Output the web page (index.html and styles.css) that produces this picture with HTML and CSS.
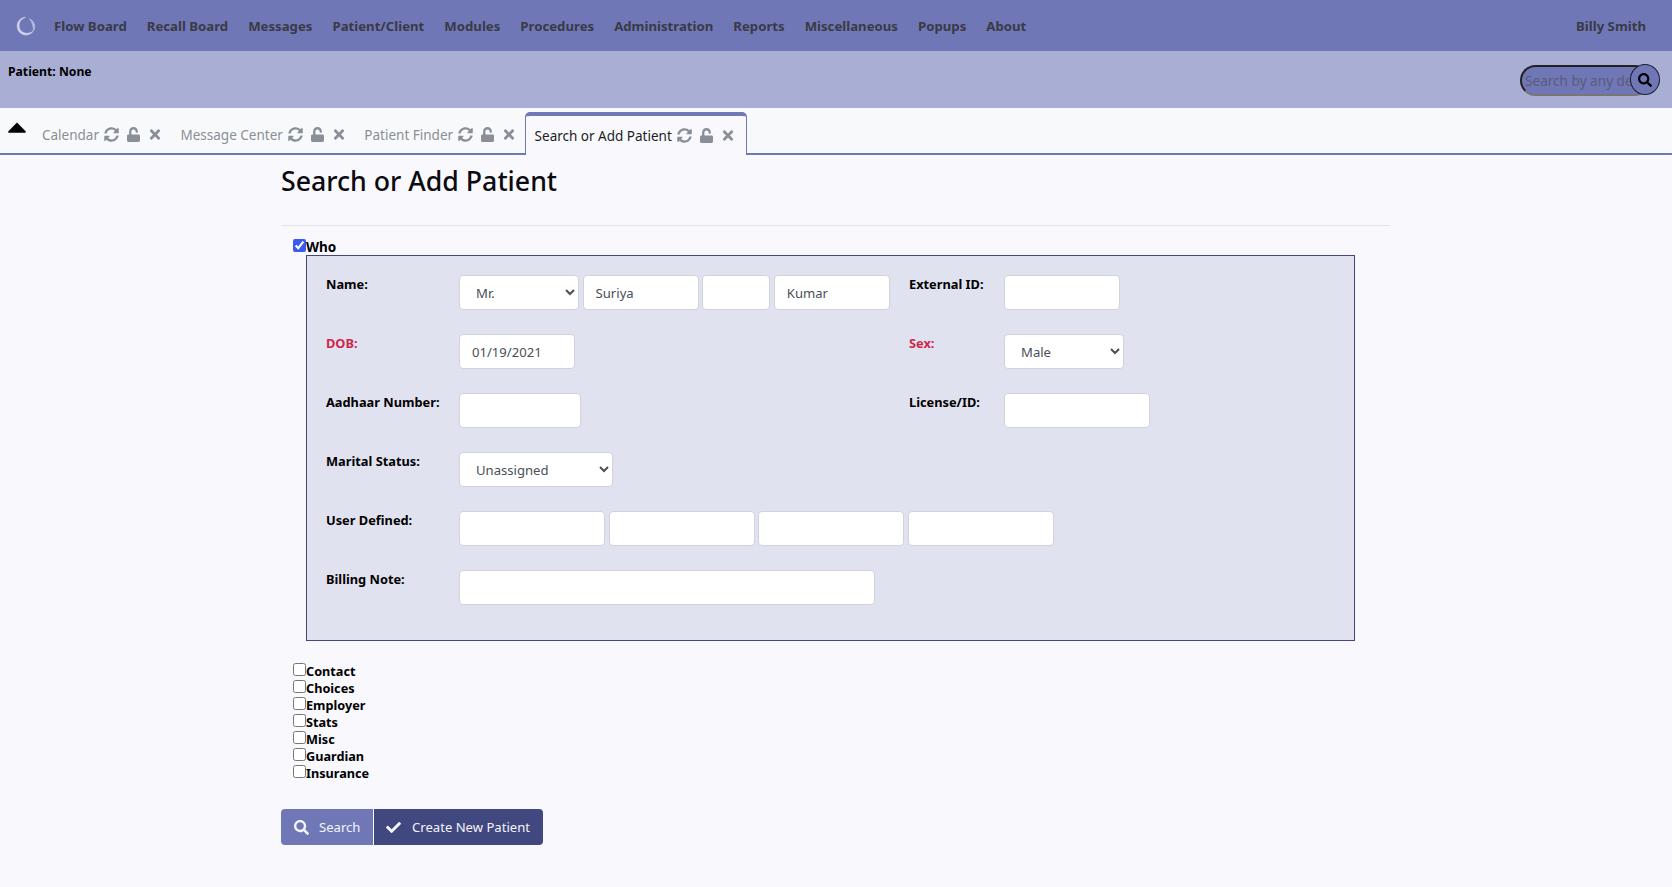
FILE: index.html
```html
<!DOCTYPE html>
<html lang="en">
<head>
<meta charset="utf-8">
<title>Search or Add Patient</title>
<link rel="stylesheet" href="styles.css">
</head>
<body>
<svg class="defs" width="0" height="0" aria-hidden="true">
  <symbol id="i-sync" viewBox="0 0 512 512"><path d="M370.72 133.28C339.458 104.008 298.888 87.962 255.848 88c-77.458.068-144.328 53.178-162.791 126.85-1.344 5.363-6.122 9.15-11.651 9.15H24.103c-7.498 0-13.194-6.807-11.807-14.176C33.933 94.924 134.813 8 256 8c66.448 0 126.791 26.136 171.315 68.685L463.03 40.97C478.149 25.851 504 36.559 504 57.941V192c0 13.255-10.745 24-24 24H345.941c-21.382 0-32.09-25.851-16.971-40.971l41.75-41.749zM32 296h134.059c21.382 0 32.09 25.851 16.971 40.971l-41.75 41.75c31.262 29.273 71.835 45.319 114.876 45.28 77.418-.07 144.315-53.144 162.787-126.849 1.344-5.363 6.122-9.15 11.651-9.15h57.304c7.498 0 13.194 6.807 11.807 14.176C478.067 417.076 377.187 504 256 504c-66.448 0-126.791-26.136-171.315-68.685L48.97 471.03C33.851 486.149 8 475.441 8 454.059V320c0-13.255 10.745-24 24-24z"/></symbol>
  <symbol id="i-unlock" viewBox="0 0 448 512"><path d="M400 256H152V152.9c0-39.6 31.7-72.5 71.3-72.9 40-.4 72.7 32.1 72.7 72v16c0 13.3 10.7 24 24 24h32c13.3 0 24-10.7 24-24v-16C376 68 307.5-.3 223.5 0 139.5.3 72 69.5 72 153.5V256H48c-26.5 0-48 21.5-48 48v160c0 26.5 21.5 48 48 48h352c26.5 0 48-21.5 48-48V304c0-26.5-21.5-48-48-48z"/></symbol>
  <symbol id="i-times" viewBox="0 0 352 512"><path d="M242.72 256l100.07-100.07c12.28-12.28 12.28-32.19 0-44.48l-22.24-22.24c-12.28-12.28-32.19-12.28-44.48 0L176 189.28 75.93 89.21c-12.28-12.28-32.19-12.28-44.48 0L9.21 111.45c-12.28 12.28-12.28 32.19 0 44.48L109.28 256 9.21 356.07c-12.28 12.28-12.28 32.19 0 44.48l22.24 22.24c12.28 12.28 32.2 12.28 44.48 0L176 322.72l100.07 100.07c12.28 12.28 32.2 12.28 44.48 0l22.24-22.24c12.28-12.28 12.28-32.19 0-44.48L242.72 256z"/></symbol>
  <symbol id="i-search" viewBox="0 0 512 512"><path d="M505 442.7L405.3 343c-4.5-4.5-10.6-7-17-7H372c27.6-35.3 44-79.7 44-128C416 93.1 322.9 0 208 0S0 93.1 0 208s93.1 208 208 208c48.3 0 92.7-16.4 128-44v16.3c0 6.4 2.5 12.5 7 17l99.7 99.7c9.4 9.4 24.6 9.4 33.9 0l28.3-28.3c9.4-9.4 9.4-24.6.1-34zM208 336c-70.7 0-128-57.2-128-128 0-70.7 57.2-128 128-128 70.7 0 128 57.2 128 128 0 70.7-57.2 128-128 128z"/></symbol>
  <symbol id="i-check" viewBox="0 0 512 512"><path d="M173.898 439.404l-166.4-166.4c-9.997-9.997-9.997-26.206 0-36.204l36.203-36.204c9.997-9.998 26.207-9.998 36.204 0L192 312.69 432.095 72.596c9.997-9.997 26.207-9.997 36.204 0l36.203 36.204c9.997 9.997 9.997 26.206 0 36.204l-294.4 294.401c-9.998 9.997-26.207 9.997-36.204-.001z"/></symbol>
</svg>

<header class="navbar">
  <svg class="logo" viewBox="0 0 20 20">
    <path class="logo-strong" d="M9.5 1.3C4.5 1.5 1 5.5 1.2 10.5C1.4 15.5 5.5 19.3 10.5 19C13.5 18.8 16 17.2 17.3 15C14.5 17.2 10.5 18 7 16.3C3.5 14.5 2.5 10.5 3.5 7C4.3 4.3 6.5 2.5 9.5 1.3Z"/>
    <path class="logo-soft" d="M13.5 2.6C16.8 4.5 19 7.5 18.7 11.5C18.5 13 18 14 17.3 15C17.6 11 16.5 6.5 13.5 2.6Z"/>
  </svg>
  <nav class="menu">
    <span>Flow Board</span><span>Recall Board</span><span>Messages</span><span>Patient/Client</span><span>Modules</span><span>Procedures</span><span>Administration</span><span>Reports</span><span>Miscellaneous</span><span>Popups</span><span>About</span>
  </nav>
  <span class="user">Billy Smith</span>
</header>

<section class="subbar">
  <span class="patient">Patient: None</span>
  <div class="finder">
    <input class="finder-input" type="text" placeholder="Search by any demographics">
    <span class="finder-btn"><svg class="finder-icon"><use href="#i-search"/></svg></span>
  </div>
</section>

<div class="tabbar">
  <svg class="collapse" viewBox="0 0 18 11"><path d="M9 0.5L17.6 9.2Q18.4 10.6 17 10.8H1Q-0.4 10.6 0.4 9.2Z"/></svg>
  <div class="tab"><span>Calendar</span><svg class="ic ic-sync"><use href="#i-sync"/></svg><svg class="ic ic-lock"><use href="#i-unlock"/></svg><svg class="ic ic-x"><use href="#i-times"/></svg></div>
  <div class="tab"><span>Message Center</span><svg class="ic ic-sync"><use href="#i-sync"/></svg><svg class="ic ic-lock"><use href="#i-unlock"/></svg><svg class="ic ic-x"><use href="#i-times"/></svg></div>
  <div class="tab"><span>Patient Finder</span><svg class="ic ic-sync"><use href="#i-sync"/></svg><svg class="ic ic-lock"><use href="#i-unlock"/></svg><svg class="ic ic-x"><use href="#i-times"/></svg></div>
  <div class="tab tab-active"><span>Search or Add Patient</span><svg class="ic ic-sync"><use href="#i-sync"/></svg><svg class="ic ic-lock"><use href="#i-unlock"/></svg><svg class="ic ic-x"><use href="#i-times"/></svg></div>
</div>

<main class="content">
  <h1 class="title">Search or Add Patient</h1>
  <hr class="rule">
  <label class="section-toggle who"><input type="checkbox" checked>Who</label>
  <div class="who-box">
    <div class="form-grid">
      <div class="lbl">Name:</div>
      <div class="ctrl ctrl-row">
        <select class="field w-title"><option>Mr.</option></select>
        <input class="field w-first" type="text" value="Suriya">
        <input class="field w-mid" type="text">
        <input class="field w-first" type="text" value="Kumar">
      </div>
      <div class="lbl">External ID:</div>
      <div class="ctrl"><input class="field w-ext" type="text"></div>

      <div class="lbl req">DOB:</div>
      <div class="ctrl"><input class="field w-dob" type="text" value="01/19/2021"></div>
      <div class="lbl req">Sex:</div>
      <div class="ctrl"><select class="field w-sex"><option>Male</option></select></div>

      <div class="lbl">Aadhaar Number:</div>
      <div class="ctrl"><input class="field w-aad" type="text"></div>
      <div class="lbl">License/ID:</div>
      <div class="ctrl"><input class="field w-lic" type="text"></div>

      <div class="lbl">Marital Status:</div>
      <div class="ctrl span3"><select class="field w-mar"><option>Unassigned</option></select></div>

      <div class="lbl">User Defined:</div>
      <div class="ctrl ctrl-row span3">
        <input class="field w-user" type="text">
        <input class="field w-user" type="text">
        <input class="field w-user" type="text">
        <input class="field w-user" type="text">
      </div>

      <div class="lbl">Billing Note:</div>
      <div class="ctrl span3"><input class="field w-bill" type="text"></div>
    </div>
  </div>

  <div class="toggles">
    <label class="section-toggle"><input type="checkbox">Contact</label>
    <label class="section-toggle"><input type="checkbox">Choices</label>
    <label class="section-toggle"><input type="checkbox">Employer</label>
    <label class="section-toggle"><input type="checkbox">Stats</label>
    <label class="section-toggle"><input type="checkbox">Misc</label>
    <label class="section-toggle"><input type="checkbox">Guardian</label>
    <label class="section-toggle"><input type="checkbox">Insurance</label>
  </div>

  <div class="actions">
    <button class="btn btn-search" type="button"><svg class="btn-ic"><use href="#i-search"/></svg>Search</button>
    <button class="btn btn-create" type="button"><svg class="btn-ic"><use href="#i-check"/></svg>Create New Patient</button>
  </div>
</main>
</body>
</html>
```

FILE: styles.css
```css
* { box-sizing: border-box; }
html, body { margin: 0; padding: 0; }
body {
  height: 887px;
  overflow: hidden;
  background: #f8f8fd;
  font-family: "Noto Sans", "Open Sans", sans-serif;
  font-size: 14px;
  color: #000;
}
.defs { position: absolute; }

.navbar {
  height: 51px;
  background: #6f77b7;
  display: flex;
  align-items: center;
  padding: 0 26px 0 16px;
  color: #3a3a45;
  font-weight: 700;
  font-size: 13.2px;
}
.logo { width: 20px; height: 20px; flex: none; }
.logo-strong { fill: #d3d6ec; stroke: #d3d6ec; stroke-width: 0.5; }
.logo-soft { fill: #b9bde0; stroke: #b9bde0; stroke-width: 0.7; }
.menu { display: flex; gap: 20px; margin-left: 18px; flex: 1; }
.user { display: block; }

.subbar {
  height: 57px;
  background: #a9aed4;
  padding: 12px 12px 0 8px;
  display: flex;
  justify-content: space-between;
  align-items: flex-start;
}
.patient { font-weight: 700; font-size: 12.2px; line-height: 18px; }
.finder { display: flex; margin-top: 1px; position: relative; width: 140px; height: 32px; }
.finder-input {
  width: 130px;
  height: 31px;
  margin-top: 1px;
  padding: 0 3px;
  border: 2px inset #767676;
  border-radius: 16px;
  background: #6f77b7;
  font: 13.6px "Noto Sans", sans-serif;
}
.finder-input::placeholder { color: #5a5c78; }
.finder-btn {
  position: absolute;
  right: 0;
  top: 0;
  width: 30px;
  height: 31px;
  border: 1px solid #1d1d2a;
  border-radius: 50%;
  background: #6f77b7;
  display: flex;
  align-items: center;
  justify-content: center;
}
.finder-icon { width: 14px; height: 14px; fill: #000; }

.tabbar {
  height: 47px;
  border-bottom: 2px solid #7077b7;
  display: flex;
  align-items: flex-end;
  position: relative;
  padding-left: 42px;
  background: #f8f9fb;
}
.collapse { position: absolute; left: 8px; top: 14px; width: 18px; height: 11px; fill: #000; }
.tab {
  display: flex;
  align-items: center;
  height: 37px;
  margin-right: 19.5px;
  color: #888f96;
  font-size: 13.5px;
  fill: #888f96;
}
.ic { flex: none; height: 15px; }
.ic-sync { width: 15px; margin-left: 5px; }
.ic-lock { width: 13px; margin-left: 8px; }
.ic-x { width: 12px; margin-left: 9px; }
.tab-active {
  height: 43px;
  margin: 0 0 -2px -10px;
  padding: 0 9px 0 9px;
  width: 222px;
  background: #f8f8fd;
  color: #1d1d24;
  border: 1px solid #7077b7;
  border-top: 4px solid #7077b7;
  border-bottom: 0;
  border-radius: 5px 5px 0 0;
}

.content { width: 1109px; margin-left: 281px; }
.title {
  margin: 0;
  padding-top: 8px;
  font-size: 26.7px;
  font-weight: 500;
  line-height: 36px;
  height: 70px;
  color: #0b0b0f;
}
.rule { margin: 0 0 12px; border: 0; border-top: 1px solid #e3e4ea; }

.section-toggle {
  display: flex;
  align-items: flex-start;
  height: 17px;
  padding-left: 12px;
  font-weight: 700;
  font-size: 12.7px;
  line-height: 19px;
}
.section-toggle input { width: 13px; height: 13px; margin: 1px 0 0 0; accent-color: #3b5bf0; }
.who { font-size: 13.5px; }

.who-box {
  margin-left: 25px;
  width: 1049px;
  height: 386px;
  background: #e0e2ef;
  border: 1px solid #41467f;
  padding: 19px 0 0 19px;
}
.form-grid {
  display: grid;
  grid-template-columns: 133px 450px 95px auto;
  grid-auto-rows: 35px;
  row-gap: 24px;
  justify-content: start;
}
.lbl { font-weight: 700; font-size: 12.8px; line-height: 18px; }
.req { color: #d0264b; }
.ctrl { min-width: 0; }
.ctrl-row { display: flex; gap: 3.6px; }
.span3 { grid-column: span 3; }

.field {
  display: block;
  height: 35px;
  padding: 0 12px;
  background: #fff;
  border: 1px solid #d0d2dc;
  border-radius: 4px;
  font: 13.1px "Noto Sans", sans-serif;
  color: #495057;
  outline: 0;
}
select.field { padding-left: 12px; }
.w-title { width: 120px; }
.w-first { width: 116px; }
.w-mid { width: 68px; }
.w-ext { width: 116px; }
.w-dob { width: 116px; }
.w-sex { width: 120px; }
.w-aad { width: 122px; }
.w-lic { width: 146px; }
.w-mar { width: 154px; }
.w-user { width: 146px; }
.w-bill { width: 416px; }

.toggles { margin-top: 21px; }

.actions { display: flex; gap: 1px; margin-top: 28px; }
.btn {
  height: 36px;
  display: flex;
  align-items: center;
  border: 0;
  color: #f4f4fb;
  fill: #f4f4fb;
  font: 13.1px "Noto Sans", sans-serif;
  white-space: nowrap;
  padding: 0 0 0 13px;
}
.btn-search { width: 92px; background: #7077b7; border-radius: 4px 0 0 4px; }
.btn-create { width: 169px; padding-left: 12px; background: #41477f; border-radius: 0 4px 4px 0; }
.btn-ic { width: 15px; height: 15px; margin-right: 10px; flex: none; }
.btn-create .btn-ic { margin-right: 11px; }
```
